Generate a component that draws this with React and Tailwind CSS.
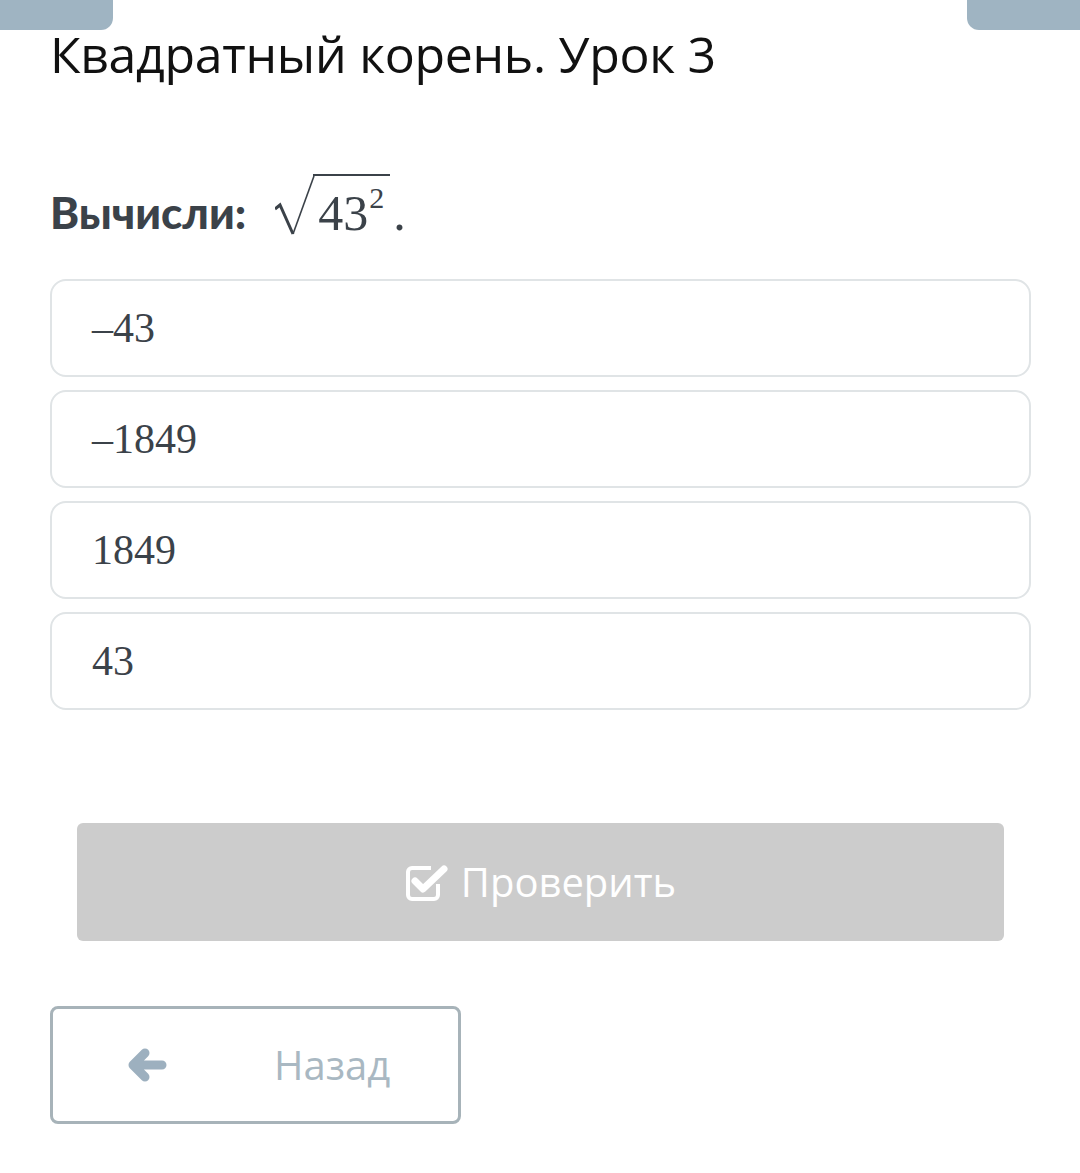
const options = ["–43", "–1849", "1849", "43"]

function CheckSquare() {
  return (
    <svg width="44" height="40" viewBox="0 0 44 40" fill="none">
      <path
        d="M33 22 V33 a4 4 0 0 1 -4 4 H7 a4 4 0 0 1 -4 -4 V10 a4 4 0 0 1 4 -4 H26"
        stroke="white"
        strokeWidth="4"
      />
      <path
        d="M10 19 L18 27 L39 7"
        stroke="white"
        strokeWidth="7"
        strokeLinecap="round"
        strokeLinejoin="round"
      />
    </svg>
  )
}

function ArrowBack() {
  return (
    <svg width="40" height="34" viewBox="0 0 40 34" fill="none">
      <path
        d="M6 17 H35 M18 5 L6 17 L18 29"
        stroke="#9db0bf"
        strokeWidth="9"
        strokeLinecap="round"
        strokeLinejoin="round"
      />
    </svg>
  )
}

export default function App() {
  return (
    <div className="h-[1173px] w-[1080px] overflow-hidden bg-white font-['Open_Sans',sans-serif]">
      <div className="flex justify-between">
        <div className="h-[30px] w-[113px] rounded-br-[12px] bg-[#9fb4c2]" />
        <div className="h-[30px] w-[113px] rounded-bl-[12px] bg-[#9fb4c2]" />
      </div>

      <div className="px-[50px]">
        <h1 className="-mt-[6px] text-[50px] leading-[60px] tracking-[-0.3px] text-[#111]">
          Квадратный корень. Урок 3
        </h1>

        <div className="mt-[90px] flex items-end">
          <span className="font-['Lato',sans-serif] text-[44px] font-black leading-[46px] text-[#3b4249]">
            Вычисли:
          </span>
          <span className="ml-[29px] flex items-end font-['Liberation_Serif',serif] text-[#3b4249]">
            <svg width="40" height="60" viewBox="0 0 40 60" className="-mr-[2px]">
              <path d="M0 34 L5 30 L18 59" fill="none" stroke="#3b4249" strokeWidth="3" />
              <path d="M18 59 L39 1" fill="none" stroke="#3b4249" strokeWidth="1.6" />
            </svg>
            <span className="border-t-2 border-[#3b4249] pl-[5px] pr-[6px] pt-[15px] text-[50px] leading-[44px]">
              43
              <span className="relative -top-[22px] ml-[1px] text-[30px] leading-none">2</span>
            </span>
            <span className="ml-[3px] text-[50px] leading-[44px]">.</span>
          </span>
        </div>

        <div className="mt-[44px] flex w-[981px] flex-col gap-[13px]">
          {options.map((o) => (
            <div
              key={o}
              className="flex h-[98px] items-center rounded-[16px] border-2 border-[#e0e4e6] pl-[40px] font-['Liberation_Serif',serif] text-[42px] text-[#3b4249]"
            >
              {o}
            </div>
          ))}
        </div>
      </div>

      <div className="mt-[113px] px-[77px]">
        <div className="flex h-[118px] w-[927px] items-center justify-center gap-[12px] rounded-[6px] bg-[#cccccc] text-[40px] text-white">
          <CheckSquare />
          <span>Проверить</span>
        </div>
      </div>

      <div className="mt-[65px] px-[50px]">
        <div className="flex h-[118px] w-[411px] items-center rounded-[8px] border-[3px] border-[#a7b3b9] pl-[74px] text-[40px] text-[#a9b8c2]">
          <ArrowBack />
          <span className="ml-[107px]">Назад</span>
        </div>
      </div>
    </div>
  )
}
